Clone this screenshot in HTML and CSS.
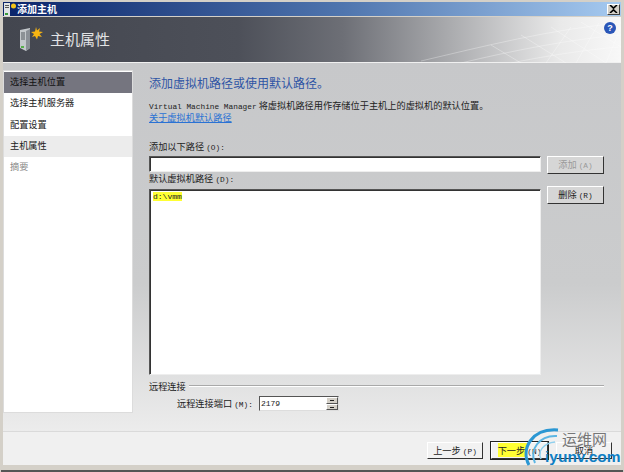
FILE: index.html
```html
<!DOCTYPE html>
<html lang="zh">
<head>
<meta charset="utf-8">
<title>添加主机</title>
<link rel="stylesheet" href="styles.css">
</head>
<body>
<div class="window">
  <div class="titlebar">
    <svg class="title-icon" width="14" height="14" viewBox="0 0 14 14"><rect x="1" y="1" width="6" height="13" fill="#dfe3e6"/><rect x="2" y="3" width="4" height="1" fill="#555"/><rect x="2" y="5" width="4" height="1" fill="#555"/><rect x="2" y="11" width="3" height="2" fill="#3a9a3a"/><circle cx="10.500" cy="4" r="2.500" fill="#f5c518"/></svg>
    <span class="title-text">添加主机</span>
    <span class="close"><svg width="9" height="8" viewBox="0 0 9 8"><path d="M1 0L4.500 3.200L8 0M1 8L4.500 4.800L8 8" stroke="#000" stroke-width="1.600" fill="none"/></svg></span>
  </div>
  <div class="banner">
    <svg class="mesh" width="200" height="46" viewBox="0 0 200 46" fill="none" stroke="#fff" stroke-opacity=".3" stroke-width="1"><path d="M0 44C60 30 130 12 200 6M40 46C90 34 150 22 200 18M90 46C130 38 170 32 200 30M70 28L100 46M100 18L145 46M130 10L185 46M160 5L200 30M125 46L150 10M155 46L178 6M185 46L200 10"/></svg>
    <svg class="banner-icon" width="24" height="25" viewBox="0 0 24 25"><path d="M1 4L11 2V22L7 25L1 22Z" fill="#c4c8cc"/><path d="M7 5L11 3V22L7 25Z" fill="#8b9097"/><path d="M2 7H6M2 9H6M2 11H6M2 13H6" stroke="#555a60"/><rect x="2" y="20" width="3" height="2" fill="#58b04a"/><path d="M17 1L18 4.500L21 2L20 5.500L24 6L20.500 8L23 11L19 10L18 13.500L16 10L13 11L15 8L12 6L16 5.500Z" fill="#f7b512"/></svg>
    <span class="banner-title">主机属性</span>
    <span class="help">?</span>
  </div>
  <div class="main">
    <nav class="steps">
      <div class="step step-current">选择主机位置</div>
      <div class="step">选择主机服务器</div>
      <div class="step">配置设置</div>
      <div class="step step-active">主机属性</div>
      <div class="step step-muted">摘要</div>
    </nav>
    <section class="content">
      <h1 class="heading">添加虚拟机路径或使用默认路径。</h1>
      <p class="desc"><span class="latin">Virtual Machine Manager</span> 将虚拟机路径用作存储位于主机上的虚拟机的默认位置。</p>
      <a class="link" href="#">关于虚拟机默认路径</a>
      <div class="label add-label">添加以下路径 <span class="latin">(O):</span></div>
      <div class="row">
        <div class="field input"></div>
        <div class="btn btn-disabled side-btn">添加 <span class="latin">(A)</span></div>
      </div>
      <div class="label list-label">默认虚拟机路径 <span class="latin">(D):</span></div>
      <div class="row row-list">
        <div class="field list"><span class="mark">d:\vmm</span></div>
        <div class="btn side-btn">删除 <span class="latin">(R)</span></div>
      </div>
      <div class="group"><span class="label">远程连接</span><span class="rule"></span></div>
      <div class="port">
        <span class="label">远程连接端口 <span class="latin">(M):</span></span>
        <div class="spin"><span class="spin-val">2179</span><span class="spin-btns"><i class="up"></i><i class="down"></i></span></div>
      </div>
    </section>
  </div>
  <div class="footer">
    <div class="btn foot-btn">上一步 <span class="latin">(P)</span></div>
    <div class="btn foot-btn btn-default"><span class="mark">下一步 </span><span class="latin">(N)</span></div>
    <div class="btn foot-btn">取消</div>
    <div class="wm">
      <svg class="wm-arc" width="44" height="46" viewBox="0 0 44 46" fill="none"><path d="M7 40C-2 24 10 3 36 5" stroke="#2b97d3" stroke-width="3"/><path d="M13 38C7 25 17 10 35 11" stroke="#5cb6e3" stroke-width="2"/><path d="M19 34C15 26 22 18 33 17" stroke="#8fd0ee" stroke-width="1.500"/></svg>
      <span class="wm-cn">运维网</span>
      <span class="wm-en">iyunv.com</span>
    </div>
  </div>
</div>
</body>
</html>
```
FILE: styles.css
```css
* { box-sizing: border-box; }
html, body { margin: 0; padding: 0; }
body {
  width: 624px;
  height: 472px;
  background: #fff;
  font-family: "Noto Sans CJK SC", "Liberation Sans", sans-serif;
  font-size: 9.200px;
  color: #222;
  overflow: hidden;
}
.window {
  width: 624px;
  height: 472px;
  display: flex;
  flex-direction: column;
  background: #d4d0c8;
  border: 1px solid #d4d0c8;
  border-bottom: 0;
  padding: 1px 2px 5px;
  box-shadow: inset 0 -2px 0 #555;
}
.latin { font-family: "Liberation Mono", monospace; font-size: 7.800px; line-height: 1; }
.titlebar {
  height: 14px;
  display: flex;
  align-items: center;
  gap: 0;
  padding: 0 1px 0 0;
  background: linear-gradient(90deg, #0a246a, #4f75ae 55%, #a6caf0);
  flex: none;
}
.title-text { color: #fff; font-size: 10px; font-weight: 700; line-height: 14px; }
.close {
  margin-left: auto;
  width: 13px;
  height: 11px;
  background: #d4d0c8;
  border: 1px solid;
  border-color: #fff #404040 #404040 #fff;
  display: flex;
  align-items: center;
  justify-content: center;
}
.banner {
  position: relative;
  height: 46px;
  flex: none;
  margin-top: 1px;
  display: flex;
  align-items: center;
  padding-left: 16px;
  padding-bottom: 2px;
  background: linear-gradient(90deg, #43464f 0%, #4d5059 38%, #6d6f76 55%, #a9aaad 72%, #e9e9e9 90%, #f8f8f8 100%);
  border-bottom: 1px solid #f0f0f0;
}
.mesh { position: absolute; right: 0; top: 0; }
.banner-icon { position: relative; }
.banner-title {
  position: relative;
  margin-left: 7px;
  color: #e2e3e5;
  font-size: 15px;
  line-height: 20px;
}
.help {
  position: absolute;
  right: 5px;
  top: 5px;
  width: 12px;
  height: 12px;
  border-radius: 50%;
  background: #2a56b8;
  color: #fff;
  font: 700 9px/12px "Liberation Sans", sans-serif;
  text-align: center;
}
.main {
  flex: 1;
  min-height: 0;
  display: flex;
  padding: 7px 0 18px 0;
  background: linear-gradient(180deg, #c7c8ca 0%, #cbcccd 60%, #ececec 100%);
}
.steps {
  width: 130px;
  flex: none;
  background: #fff;
  border: 1px solid #dcdcdc;
  padding-top: 1px;
}
.step { height: 21.300px; line-height: 19px; padding-left: 6px; font-size: 9.200px; color: #222; }
.step-current { background: #75757f; color: #111; }
.step-active { background: #ececec; }
.step-muted { color: #888; }
.content {
  flex: 1;
  min-width: 0;
  padding: 4px 17px 0 16px;
  display: flex;
  flex-direction: column;
}
.heading {
  margin: 0;
  font-size: 12px;
  font-weight: 400;
  color: #2f55a5;
  line-height: 18px;
}
.desc { margin: 8px 0 0; font-size: 9.200px; line-height: 11px; color: #222; white-space: nowrap; }
.link { font-size: 9.200px; line-height: 11px; color: #2a72d4; text-decoration: underline; align-self: flex-start; }
.label { font-size: 9.200px; line-height: 12px; color: #222; white-space: nowrap; }
.add-label { margin-top: 17px; }
.row { display: flex; gap: 6px; margin-top: 3px; align-items: flex-start; }
.row-list { margin-top: 5px; }
.field {
  flex: 1;
  background: #fff;
  border: 1px solid;
  border-color: #555 #eee #eee #555;
  box-shadow: inset 1px 1px 0 #333;
}
.input { height: 16px; }
.list { height: 186px; padding: 1px 3px; font: 8px/11px "Liberation Mono", monospace; color: #222; }
.list-label { margin-top: -2px; }
.mark { background: #ffff33; }
.btn {
  height: 18px;
  background: #d4d0c8;
  border: 1px solid;
  border-color: #fff #333 #333 #fff;
  text-align: center;
  font-size: 9.200px;
  line-height: 15px;
  color: #222;
  white-space: nowrap;
}
.side-btn { width: 57px; flex: none; background: #d6d6d6; }
.row-list .side-btn { margin-top: -3px; }
.btn-disabled { color: #9a9a9a; }
.group { display: flex; align-items: center; gap: 3px; margin-top: 5px; }
.rule { flex: 1; height: 2px; background: #a9a9a9; border-bottom: 1px solid #fff; }
.port { display: flex; align-items: center; margin: 4px 0 0 28px; gap: 6px; }
.spin {
  width: 80px;
  height: 15px;
  display: flex;
  background: #fff;
  border: 1px solid;
  border-color: #555 #ddd #ddd #555;
}
.spin-val { flex: 1; font: 8px/13px "Liberation Mono", monospace; padding-left: 1px; color: #222; }
.spin-btns { width: 12px; display: flex; flex-direction: column; }
.spin-btns i { flex: 1; background: #d4d0c8; border: 1px solid; border-color: #fff #555 #555 #fff; position: relative; }
.spin-btns i::after { content: ""; position: absolute; left: 3px; top: 2px; width: 4px; height: 1px; background: #222; }
.footer {
  position: relative;
  height: 34px;
  flex: none;
  margin-bottom: 2px;
  display: flex;
  justify-content: flex-end;
  align-items: flex-start;
  gap: 8px;
  padding: 10px 9px 0 0;
  background: #f0f0f0;
  border-top: 1px solid #dadada;
}
.foot-btn { width: 56px; height: 17px; background: #f2f2f2; line-height: 14px; }
.btn-default { width: 57px; outline: 1px solid #222; }
.wm { position: absolute; right: -3px; bottom: -6px; width: 102px; height: 46px; }
.wm-arc { position: absolute; left: 0; top: 0; }
.wm-cn { position: absolute; left: 40px; top: 6px; font-size: 15px; line-height: 16px; color: #777; }
.wm-en { position: absolute; left: 23px; top: 23px; font: 700 15.500px/17px "Liberation Sans", sans-serif; color: #0f7fc4; }
```
